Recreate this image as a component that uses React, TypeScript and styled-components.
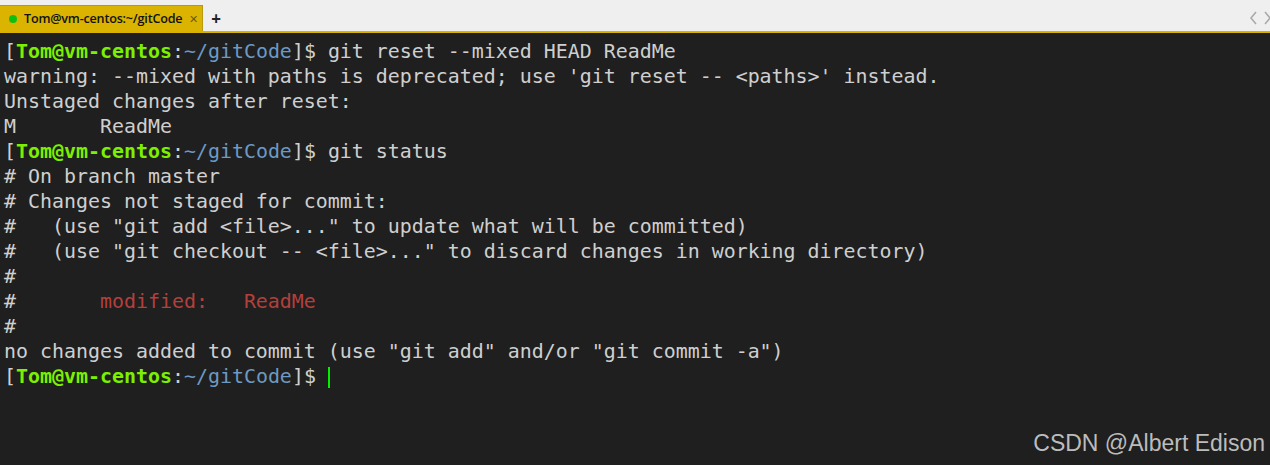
import React from "react";
import styled, { createGlobalStyle } from "styled-components";

const Global = createGlobalStyle`
  html, body { margin: 0; padding: 0; background: #1f1f1f; }
  body { width: 1270px; height: 465px; overflow: hidden; }
`;

const Window = styled.div`
  width: 1270px;
  height: 465px;
  display: flex;
  flex-direction: column;
  background: #1f1f1f;
  position: relative;
`;

const TabBar = styled.div`
  height: 31px;
  flex: none;
  display: flex;
  align-items: flex-end;
  background: #efefef;
  border-bottom: 2px solid #d8b200;
  font-family: "Open Sans", "Noto Sans", sans-serif;
`;

const Tab = styled.div`
  width: 203px;
  flex: none;
  height: 26px;
  box-sizing: border-box;
  display: flex;
  align-items: center;
  background: #dab400;
  border-top: 1px solid #b89a10;
  border-right: 1px solid #b89a10;
  padding-left: 9px;
  gap: 7px;
  overflow: hidden;
`;

const Dot = styled.span`
  width: 8px;
  height: 8px;
  border-radius: 50%;
  background: #10c010;
  flex: none;
`;

const TabTitle = styled.span`
  font-size: 12.6px;
  font-weight: 600;
  color: #111;
  white-space: nowrap;
  letter-spacing: -0.2px;
`;

const Close = styled.span`
  margin-left: auto;
  margin-right: 10px;
  color: #6a5a10;
  font-size: 11px;
  line-height: 1;
`;

const Plus = styled.span`
  width: 26px;
  height: 26px;
  display: flex;
  align-items: center;
  justify-content: center;
  font-size: 17px;
  font-weight: 700;
  color: #222;
`;

const Spacer = styled.div`
  flex: 1;
`;

const Arrows = styled.div`
  height: 26px;
  display: flex;
  align-items: center;
  gap: 5px;
  margin-right: -2px;
`;

const Terminal = styled.div`
  flex: 1;
  padding: 6px 0 0 4px;
  font-family: "DejaVu Sans Mono", "Liberation Mono", monospace;
  font-size: 19.93px;
  line-height: 25px;
  color: #cfcfcf;
  white-space: pre;
`;

const Line = styled.div`
  height: 25px;
`;

const User = styled.span`
  color: #7cf000;
  font-weight: bold;
`;

const Path = styled.span`
  color: #6c9ac4;
`;

const Red = styled.span`
  color: #b3403c;
`;

const Cursor = styled.span`
  display: inline-block;
  width: 2px;
  height: 21px;
  background: #00f000;
  vertical-align: -5px;
`;

const Watermark = styled.div`
  position: absolute;
  right: 5px;
  bottom: 8px;
  font-family: "Liberation Sans", Arial, sans-serif;
  font-size: 23px;
  color: #bcbcbc;
`;

const Prompt: React.FC = () => (
  <>
    [<User>Tom@vm-centos</User>:<Path>~/gitCode</Path>]{"$ "}
  </>
);

export default function App() {
  return (
    <Window>
      <Global />
      <TabBar>
        <Tab>
          <Dot />
          <TabTitle>Tom@vm-centos:~/gitCode</TabTitle>
          <Close>✕</Close>
        </Tab>
        <Plus>+</Plus>
        <Spacer />
        <Arrows>
          <svg width="9" height="14" viewBox="0 0 9 14">
            <path d="M7 1 L2 7 L7 13" stroke="#a8a8a8" strokeWidth="1.5" fill="none" />
          </svg>
          <svg width="9" height="14" viewBox="0 0 9 14">
            <path d="M2 1 L7 7 L2 13" stroke="#a8a8a8" strokeWidth="1.5" fill="none" />
          </svg>
        </Arrows>
      </TabBar>
      <Terminal>
        <Line><Prompt />git reset --mixed HEAD ReadMe</Line>
        <Line>warning: --mixed with paths is deprecated; use 'git reset -- &lt;paths&gt;' instead.</Line>
        <Line>Unstaged changes after reset:</Line>
        <Line>{"M       ReadMe"}</Line>
        <Line><Prompt />git status</Line>
        <Line># On branch master</Line>
        <Line># Changes not staged for commit:</Line>
        <Line>{'#   (use "git add <file>..." to update what will be committed)'}</Line>
        <Line>{'#   (use "git checkout -- <file>..." to discard changes in working directory)'}</Line>
        <Line>#</Line>
        <Line>{"#       "}<Red>{"modified:   ReadMe"}</Red></Line>
        <Line>#</Line>
        <Line>{'no changes added to commit (use "git add" and/or "git commit -a")'}</Line>
        <Line><Prompt /><Cursor /></Line>
      </Terminal>
      <Watermark>CSDN @Albert Edison</Watermark>
    </Window>
  );
}
